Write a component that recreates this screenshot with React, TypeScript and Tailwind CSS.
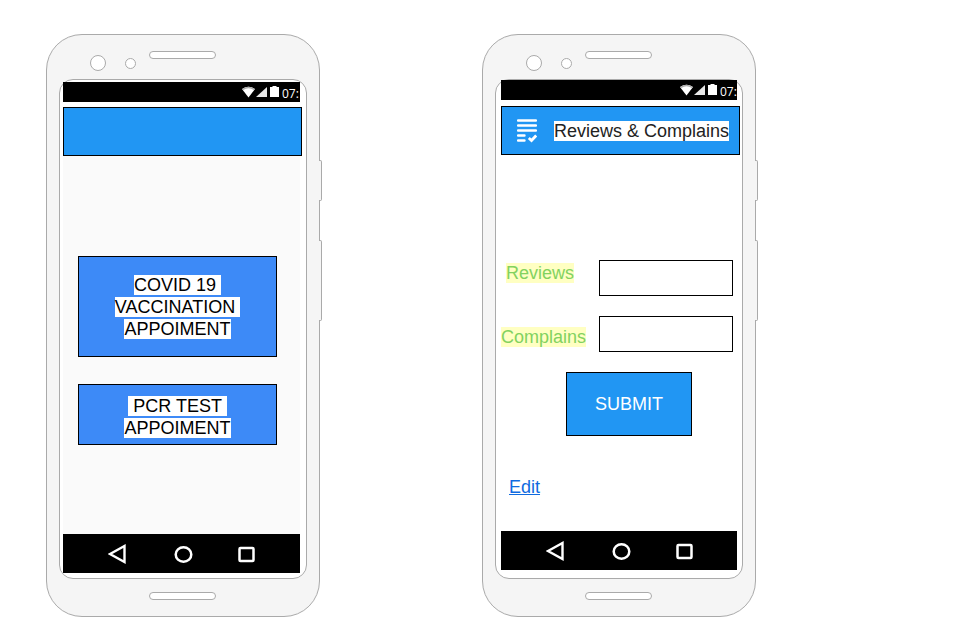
import type { ReactNode } from "react";

function StatusBar() {
  return (
    <div className="flex h-5 items-center gap-px overflow-hidden bg-black pl-[179px] text-white">
      <svg className="h-3 w-[13px] shrink-0" viewBox="0 0 13 12" aria-label="Wi-Fi">
        <path d="M0 3 Q6.500 -1.500 13 3 L6.500 11.500 Z" fill="#fff" />
        <path d="M0.300 3 Q6.500 -1.300 12.700 3 L11.800 4 Q6.500 0.500 1.200 4 Z" fill="#aaa" />
      </svg>
      <svg className="h-3 w-[11px] shrink-0" viewBox="0 0 11 12" aria-label="Signal">
        <path d="M11 1 V11 H0 Z" fill="#e8e8e8" />
      </svg>
      <svg className="mx-0.5 h-3 w-[9px] shrink-0" viewBox="0 0 9 12" aria-label="Battery">
        <path d="M2.500 0 h4 v1 h2.500 v10 h-9 v-10 h2.500 Z" fill="#fff" />
      </svg>
      <span className="pt-1 font-['Open_Sans',sans-serif] text-xs leading-4 font-medium">07:</span>
    </div>
  );
}

function NavBar() {
  return (
    <nav className="flex h-[39px] items-center gap-[47px] bg-black pl-[45px]">
      <button type="button" aria-label="Back" className="w-[18px]">
        <svg viewBox="0 0 18 20" className="h-5 w-[18px]" fill="none" stroke="#fff" strokeWidth="2.400">
          <path d="M2 10 L16.500 2 V18 Z" />
        </svg>
      </button>
      <button type="button" aria-label="Home" className="w-[18px]">
        <svg
          viewBox="0 0 18 18"
          className="h-[18px] w-[18px] overflow-visible"
          fill="none"
          stroke="#fff"
          strokeWidth="2.500"
        >
          <ellipse cx="10.500" cy="9.500" rx="7.800" ry="7.200" />
        </svg>
      </button>
      <button type="button" aria-label="Recent apps" className="w-[18px]">
        <svg viewBox="0 0 18 18" className="h-[18px] w-[18px]" fill="none" stroke="#fff" strokeWidth="2.500">
          <rect x="1.500" y="3" width="14" height="13" rx="1" />
        </svg>
      </button>
    </nav>
  );
}

function Phone({ children }: { children: ReactNode }) {
  return (
    <section className="relative w-[274px] shrink-0 rounded-[36px] border border-[#aaa] bg-[#f5f5f5]">
      <div className="absolute top-[125px] -right-[3px] h-[41px] w-[3px] rounded-r-[2px] border border-l-0 border-[#aaa] bg-[#f5f5f5]" />
      <div className="absolute top-[205px] -right-[3px] h-[81px] w-[3px] rounded-r-[2px] border border-l-0 border-[#aaa] bg-[#f5f5f5]" />
      <div className="flex h-11 items-start pt-4 pl-[43px]">
        <div className="flex items-center gap-[19px] pt-1">
          <span className="size-4 rounded-full border border-[#aaa] bg-white" />
          <span className="size-[11px] rounded-full border border-[#aaa] bg-white" />
        </div>
        <span className="ml-[13px] h-2 w-[67px] rounded-full border border-[#aaa] bg-white" />
      </div>
      <div className="mx-3 rounded-[14px] border border-[#aaa] bg-white">{children}</div>
      <div className="flex h-[37px] pt-[13px] pl-[102px]">
        <span className="h-2 w-[67px] rounded-full border border-[#aaa] bg-white" />
      </div>
    </section>
  );
}

function Line({ children }: { children: string }) {
  return (
    <span className="block leading-[22px]">
      <span className="bg-white whitespace-pre">{children}</span>
    </span>
  );
}

function AppointmentScreen() {
  return (
    <div className="flex flex-col pt-0.5 pr-1 pb-[5px] pl-[3px]">
      <div className="pr-0.5">
        <StatusBar />
      </div>
      <header className="mt-[5px] h-[49px] border border-black bg-[#2196f3]" />
      <div className="pr-0.5">
        <div className="flex flex-col gap-[27px] bg-[#fafafa] pt-[100px] pr-[23px] pb-[89px] pl-[15px]">
          <button type="button" className="h-[101px] border border-black bg-[#3d8af7] text-black">
            <Line>{"COVID 19 "}</Line>
            <Line>{"VACCINATION "}</Line>
            <Line>APPOIMENT</Line>
          </button>
          <button type="button" className="h-[61px] border border-black bg-[#3d8af7] pt-1 text-black">
            <Line>{" PCR TEST "}</Line>
            <Line>APPOIMENT</Line>
          </button>
        </div>
        <NavBar />
      </div>
    </div>
  );
}

function ReviewScreen() {
  return (
    <div className="flex flex-col pr-0.5 pb-2 pl-[5px]">
      <div className="pr-[3px]">
        <StatusBar />
      </div>
      <header className="mt-1.5 flex h-[49px] items-center border border-black bg-[#2196f3] pl-[15px]">
        <svg className="h-6 w-5 shrink-0" viewBox="0 1 20 24" fill="none" stroke="#fff" aria-hidden="true">
          <path
            d="M1 2.500 H19 M1 7.500 H19 M1 12.500 H19 M1 17.500 H7.500 M1 22.500 H7.500"
            strokeWidth="2.400"
            strokeLinecap="round"
          />
          <path d="M11.800 20 L14.500 22.500 L19.200 17.500" strokeWidth="2.800" />
        </svg>
        <h1 className="pl-[17px] leading-[22px] whitespace-nowrap text-[#222]">
          <span className="bg-white">Reviews &amp; Complains</span>
        </h1>
      </header>
      <form
        className="flex flex-col pt-[105px] pr-[7px] pb-[33px]"
        onSubmit={(event) => event.preventDefault()}
      >
        <div className="flex h-9 items-start">
          <label htmlFor="reviews" className="w-[98px] shrink-0 pt-0.5 pl-[5px] leading-[22px] text-[#82d25f]">
            <span className="bg-[#ffffc2]">Reviews</span>
          </label>
          <input id="reviews" className="h-9 w-full min-w-0 border border-black bg-white px-2" />
        </div>
        <div className="mt-5 flex h-9 items-end">
          <label htmlFor="complains" className="w-[98px] shrink-0 pb-1 leading-[22px] text-[#82d25f]">
            <span className="bg-[#ffffc2]">Complains</span>
          </label>
          <input id="complains" className="h-9 w-full min-w-0 border border-black bg-white px-2" />
        </div>
        <button type="submit" className="mt-5 ml-[65px] h-16 w-[126px] border border-black bg-[#2196f3] text-white">
          SUBMIT
        </button>
        <a href="#edit" className="mt-10 ml-2 self-start leading-[22px] text-[#0f6be0] underline">
          Edit
        </a>
      </form>
      <div className="pr-[3px]">
        <NavBar />
      </div>
    </div>
  );
}

export default function App() {
  return (
    <main className="flex min-h-screen items-start gap-[162px] bg-white pt-[34px] pl-[46px] font-['Liberation_Sans',Arial,sans-serif] text-[18px]">
      <Phone>
        <AppointmentScreen />
      </Phone>
      <Phone>
        <ReviewScreen />
      </Phone>
    </main>
  );
}
